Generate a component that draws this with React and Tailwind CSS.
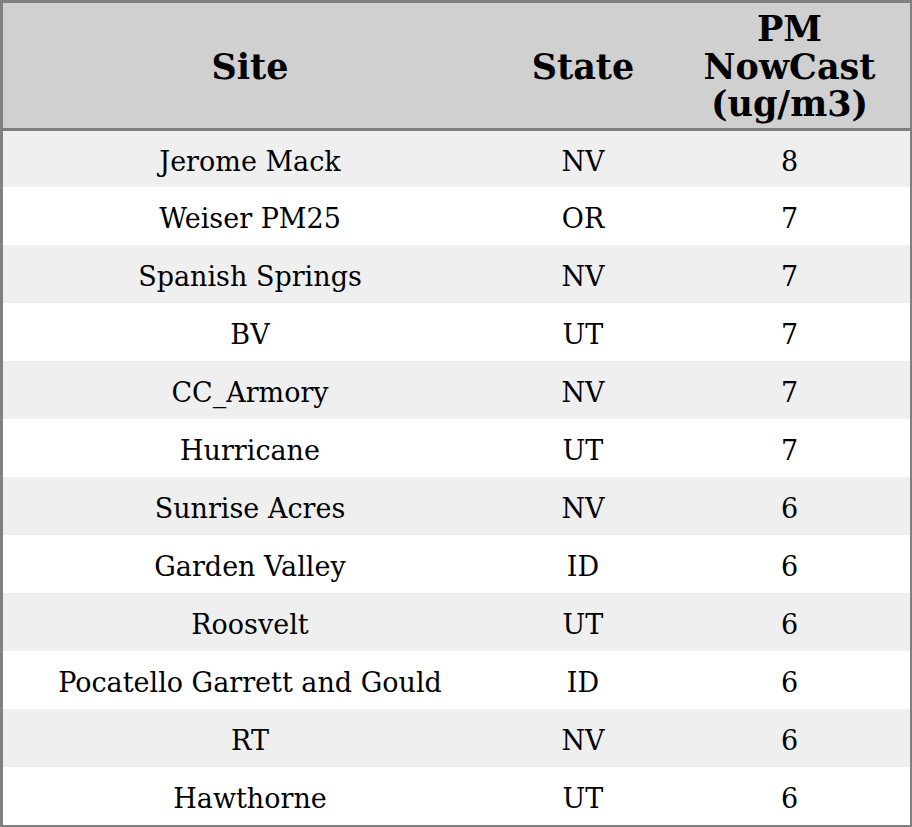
import React from "react";

const rows = [
  ["Jerome Mack", "NV", "8"],
  ["Weiser PM25", "OR", "7"],
  ["Spanish Springs", "NV", "7"],
  ["BV", "UT", "7"],
  ["CC_Armory", "NV", "7"],
  ["Hurricane", "UT", "7"],
  ["Sunrise Acres", "NV", "6"],
  ["Garden Valley", "ID", "6"],
  ["Roosvelt", "UT", "6"],
  ["Pocatello Garrett and Gould", "ID", "6"],
  ["RT", "NV", "6"],
  ["Hawthorne", "UT", "6"],
];

export default function App() {
  return (
    <div
      className="w-[912px] h-[827px] border-l-[3px] border-t-[3px] border-r-2 border-b-2 border-[#808080] text-black"
      style={{ fontFamily: '"DejaVu Serif", serif' }}
    >
      <div className="grid grid-cols-[494px_172px_241px] h-[128px] bg-[#d0d0d0] border-b-[3px] border-[#808080] font-bold text-[35px] leading-[37.5px]">
        <div className="flex items-center justify-center text-center pt-[2px]">Site</div>
        <div className="flex items-center justify-center text-center pt-[2px]">State</div>
        <div className="flex items-center justify-center text-center pt-[2px]">
          PM<br />NowCast<br />(ug/m3)
        </div>
      </div>
      {rows.map((r, i) => (
        <div
          key={i}
          className={`grid grid-cols-[494px_172px_241px] ${i === 0 ? "h-[56px]" : "h-[58px]"} ${i % 2 === 0 ? "bg-[#efefef]" : "bg-white"} text-[27px] pt-[6px]`}
        >
          <div className="flex items-center justify-center">{r[0]}</div>
          <div className="flex items-center justify-center">{r[1]}</div>
          <div className="flex items-center justify-center">{r[2]}</div>
        </div>
      ))}
    </div>
  );
}
